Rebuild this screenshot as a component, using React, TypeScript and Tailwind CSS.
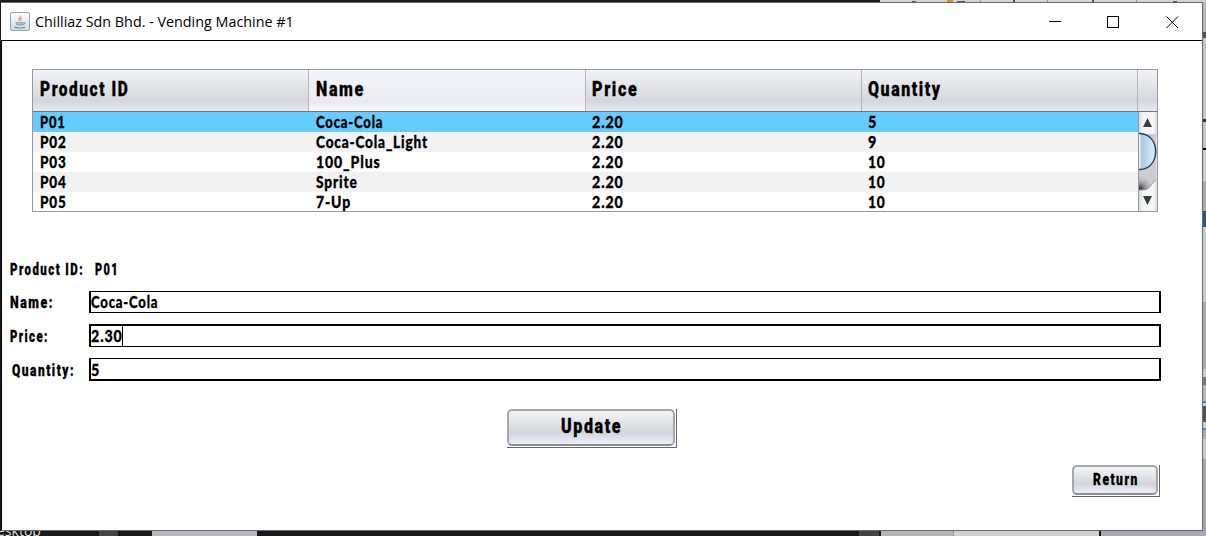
import { useLayoutEffect, useRef } from "react";

/** A single line of text squeezed horizontally to a given width. */
function Fit({ text, width, className }: { text: string; width: number; className: string }) {
  const ref = useRef<HTMLSpanElement>(null);
  useLayoutEffect(() => {
    const el = ref.current;
    if (el) el.style.transform = `scaleX(${(width + 1) / el.offsetWidth})`;
  }, [text, width]);
  return (
    <span className="flex items-start" style={{ width }}>
      <span ref={ref} className={`shrink-0 origin-left whitespace-nowrap ${className}`}>
        {text}
      </span>
    </span>
  );
}

const display = "font-['Roboto',sans-serif] font-black tracking-[2px] [-webkit-text-stroke:0.3px_black]";
const body = "font-['Lato',sans-serif] font-black tracking-[1px] [-webkit-text-stroke:0.3px_black]";

const rows: [string, number, string, number, string, number][] = [
  ["P01", 25, "Coca-Cola", 66, "5", 8],
  ["P02", 26, "Coca-Cola_Light", 111, "9", 8],
  ["P03", 26, "100_Plus", 64, "10", 17],
  ["P04", 26, "Sprite", 41, "10", 17],
  ["P05", 26, "7-Up", 34, "10", 17],
];

function JavaIcon() {
  return (
    <svg width="20" height="20" viewBox="0 0 20 20" fill="none">
      <defs>
        <linearGradient id="jbg" x1="0" y1="0" x2="0" y2="1">
          <stop offset="0" stopColor="#fdfdfd" />
          <stop offset="1" stopColor="#cfdae2" />
        </linearGradient>
      </defs>
      <rect x="0.5" y="0.5" width="19" height="18" rx="1.5" fill="url(#jbg)" stroke="#93a6b3" />
      <path d="M10.800 3.500c.6 1.700-2.800 2.500-2 4 .3.700.8.900 1 1.500M12 6c-1.800.9-2 1.500-1.200 2.600" stroke="#e8935c" strokeWidth="1.100" />
      <path d="M5.500 10.300h8c0 2-1 3.300-2.500 3.300H8c-1.500 0-2.500-1.300-2.500-3.300z" fill="#7d9bb0" />
      <path d="M6.500 11.800h6" stroke="#d6e0e7" strokeWidth=".8" />
      <path d="M13.500 10.500c2-.3 2 1.800-.6 2.200" stroke="#6789a2" />
      <path d="M4.500 15c1.500 1.300 8.500 1.300 10.500 0" stroke="#6789a2" strokeWidth="1.200" />
    </svg>
  );
}

function HeaderCell({ text, width, cell, hot }: { text: string; width: number; cell: string; hot?: boolean }) {
  return (
    <div
      className={`flex items-start border-r border-[#b4b6bd] ${cell} ${
        hot
          ? "bg-linear-to-b from-[#f4f5f9] via-[#e9ebf2] via-80% to-[#fbfbfb]"
          : "bg-linear-to-b from-[#f2f3f5] via-[#d5d7dd] via-75% to-[#e6e9f3]"
      }`}
    >
      <Fit text={text} width={width} className={`${display} text-[20px] leading-[38px]`} />
    </div>
  );
}

function ScrollBar() {
  return (
    <svg width="19" height="99" viewBox="0 0 19 99">
      <defs>
        <linearGradient id="track" x1="0" x2="1">
          <stop offset="0" stopColor="#d2d3d7" />
          <stop offset=".25" stopColor="#f4f4f6" />
          <stop offset=".8" stopColor="#f7f7f8" />
          <stop offset="1" stopColor="#dadbe0" />
        </linearGradient>
        <linearGradient id="thumb" x1="0" x2="1">
          <stop offset="0" stopColor="#91abc0" />
          <stop offset=".13" stopColor="#e7f1f9" />
          <stop offset=".24" stopColor="#b2cce1" />
          <stop offset=".4" stopColor="#b4cfe6" />
          <stop offset=".85" stopColor="#d8ebf8" />
          <stop offset="1" stopColor="#a5c2d9" />
        </linearGradient>
        <radialGradient id="dark" cx=".1" cy=".9" r=".8">
          <stop offset="0" stopColor="#303034" />
          <stop offset="1" stopColor="#c4c5ca" stopOpacity="0" />
        </radialGradient>
      </defs>
      <rect width="19" height="99" fill="url(#track)" />
      <path d="M0 22h18v46c-3 2-5 10-13 10H0z" fill="#cccdd2" />
      <path d="M0 62h18v6c-3 2-5 10-13 10H0z" fill="url(#dark)" />
      <path d="M18 68c-4 1-5 10-13 10H0" fill="none" stroke="#8b8c91" strokeWidth=".7" />
      <path d="M-1 21.500h3c21 1 21 35 0 36h-3z" fill="url(#thumb)" stroke="#2d4357" strokeWidth="1.400" />
      <path d="M5 15l4.500-9 4.500 9zM5 84h9l-4.500 9z" fill="#3b3c3f" />
      <path d="M.5 0v99" stroke="#9698a1" />
    </svg>
  );
}

function Field({ label, labelWidth, labelClass, value, valueWidth, valueClass, box, caret }: {
  label: string; labelWidth: number; labelClass: string; value: string; valueWidth: number; valueClass: string; box: string; caret?: boolean;
}) {
  return (
    <div className="flex">
      <div className={`w-[87px] ${labelClass}`}>
        <Fit text={label} width={labelWidth} className={`${display} text-[16px]`} />
      </div>
      <div className={`flex w-[1072px] border-x-2 border-black ${box}`}>
        <Fit text={value} width={valueWidth} className={`${body} text-[16px] ${valueClass}`} />
        {caret && <div className="h-full w-px bg-black" />}
      </div>
    </div>
  );
}

function Button({ text, width, className, textClass }: { text: string; width: number; className: string; textClass: string }) {
  return (
    <div className={`border-r border-b border-[#65666b] pr-px pb-px ${className}`}>
      <div className="flex h-full justify-center rounded-[5px] border-2 border-[#a6a8ad] border-b-[#8b8d93] bg-linear-to-b from-[#f4f5f6] via-[#d3d5dc] via-65% to-[#eceffa]">
        <Fit text={text} width={width} className={`${display} ${textClass}`} />
      </div>
    </div>
  );
}

export default function App() {
  return (
    <div className="flex h-[536px] w-[1206px] flex-col overflow-hidden bg-[#18181a]">
      <div className="flex h-[2px]">
        <div className="w-[880px] bg-[#1e1c1f]" />
        <div className="flex grow items-center bg-[#d4d4d4]">
          <div className="ml-8 h-px w-1 bg-[#555]" />
          <div className="ml-[31px] h-[2px] w-1.5 bg-[#d88a3e]" />
          <div className="ml-1 h-px w-2 bg-[#555]" />
          <div className="ml-[15px] h-[2px] w-px bg-[#999]" />
          <div className="ml-8 h-[2px] w-0.5 bg-[#555]" />
          <div className="ml-8 h-[2px] w-px bg-[#999]" />
          <div className="ml-11 h-[2px] w-0.5 bg-[#555]" />
          <div className="ml-[42px] h-[2px] w-px bg-[#999]" />
          <div className="ml-9 h-px w-1 bg-[#555]" />
        </div>
      </div>
      <div className="flex h-[529px]">
        <div className="w-px bg-[#1d1b1e]" />
        <main className="flex w-[1202px] flex-col border-t border-r border-b border-[#6a6a6a] bg-white">
          <header className="flex h-[38px] items-center border-b border-black pl-[9px]">
            <JavaIcon />
            <div className="ml-[5px] w-[1004px]">
              <Fit text="Chilliaz Sdn Bhd. - Vending Machine #1" width={258} className="font-['Open_Sans',sans-serif] text-[14px] leading-9" />
            </div>
            <svg width="140" height="20" viewBox="0 0 140 20" fill="none" stroke="#000">
              <path d="M10 9.500h12M68.500 4.500h11v11h-11z" shapeRendering="crispEdges" />
              <path d="M127.500 4.500l11.500 11.500M139 4.500l-11.500 11.500" />
            </svg>
          </header>
          <section className="flex grow flex-col border-l border-black">
            <div className="mt-[28px] ml-[30px] h-[143px] w-[1126px] border border-[#9698a4]">
              <div className="flex h-[42px] border-b border-[#71737c]">
                <HeaderCell text="Product ID" width={88} cell="w-[276px] pl-[7px]" />
                <HeaderCell text="Name" width={48} cell="w-[277px] pl-[7px]" hot />
                <HeaderCell text="Price" width={45} cell="w-[276px] pl-[6px]" />
                <HeaderCell text="Quantity" width={73} cell="w-[276px] pl-[6px]" />
                <div className="grow bg-linear-to-b from-[#f2f3f5] via-[#d5d7dd] via-75% to-[#e6e9f3]" />
              </div>
              <div className="flex h-[99px]">
                <div className="w-[1105px]">
                  {rows.map(([id, idW, name, nameW, qty, qtyW], i) => (
                    <div key={id} className={`flex pl-[7px] ${i === 4 ? "h-[19px]" : "h-5"} ${i === 0 ? "bg-[#66ccff]" : i % 2 ? "bg-[#f2f2f2]" : "bg-white"}`}>
                      <div className="w-[276px]"><Fit text={id} width={idW} className={`${body} text-[16px] leading-[20px]`} /></div>
                      <div className="w-[276px]"><Fit text={name} width={nameW} className={`${body} text-[16px] leading-[20px]`} /></div>
                      <div className="w-[276px]"><Fit text="2.20" width={31} className={`${body} text-[16px] leading-[20px]`} /></div>
                      <Fit text={qty} width={qtyW} className={`${body} text-[16px] leading-[20px]`} />
                    </div>
                  ))}
                </div>
                <ScrollBar />
              </div>
            </div>
            <div className="mt-[46px] flex h-[33px] pl-[8px] leading-[23px]">
              <div className="w-[85px]">
                <Fit text="Product ID:" width={73} className={`${display} text-[16px]`} />
              </div>
              <Fit text="P01" width={23} className={`${display} text-[16px]`} />
            </div>
            <div className="h-[33px]">
              <Field label="Name:" labelWidth={43} labelClass="pl-[8px] leading-[23px]" value="Coca-Cola" valueWidth={66} valueClass="leading-[20px]" box="h-[22px] border-y" />
            </div>
            <div className="h-[34px]">
              <Field label="Price:" labelWidth={38} labelClass="pl-[8px] leading-[25px]" value="2.30" valueWidth={31} valueClass="leading-[20px]" box="h-[23px] border-t-2 border-b" caret />
            </div>
            <div className="h-[51px]">
              <Field label="Quantity:" labelWidth={62} labelClass="pl-[10px] leading-[25px]" value="5" valueWidth={8} valueClass="leading-[22px]" box="h-[23px] border-t border-b-2" />
            </div>
            <Button text="Update" width={60} className="ml-[505px] h-[39px] w-[170px]" textClass="text-[20px] leading-[31px]" />
            <Button text="Return" width={45} className="mt-[17px] ml-[1070px] h-[32px] w-[88px]" textClass="text-[16px] leading-[25px]" />
          </section>
        </main>
        <div className="flex w-[3px] flex-col bg-[#a5a6aa]">
          <div className="h-[30px] bg-[#b9b9ba]" />
          <div className="h-[6px] bg-[#555]" />
          <div className="h-[81px] bg-[#c5c5c5]" />
          <div className="h-[3px] bg-[#333]" />
          <div className="h-[26px] bg-[#c5c5c5]" />
          <div className="h-[2px] bg-black" />
          <div className="h-[31px] bg-[#d0cfcc]" />
          <div className="h-[30px] bg-[#a9aaaf]" />
          <div className="h-[16px] bg-[#285878]" />
          <div className="h-[75px] bg-[#cacaca]" />
          <div className="h-[67px] bg-[#a9aaaf]" />
          <div className="h-[8px] bg-[#ccc]" />
          <div className="h-[8px] bg-[#777]" />
          <div className="h-[16px] bg-[#b3b5ba]" />
          <div className="h-[2px] bg-[#5e83a8]" />
          <div className="h-[3px] bg-[#ccc]" />
          <div className="h-[16px] bg-[#555]" />
          <div className="h-[6px] bg-[#ccc]" />
          <div className="h-[2px] bg-[#5e83a8]" />
          <div className="h-[9px] bg-[#a9aaaf]" />
          <div className="h-[20px] bg-[#ccc]" />
        </div>
      </div>
      <div className="flex h-[5px]">
        <div className="flex w-[99px] items-end overflow-hidden font-['Open_Sans',sans-serif] text-[14px] leading-[10px] text-[#ddd]">
          <span className="-ml-[3px]">esktop</span>
        </div>
        <div className="w-[19px] bg-[#444]" />
        <div className="w-[34px]" />
        <div className="w-[105px] bg-[#b8b7c0]" />
        <div className="w-[602px]" />
        <div className="w-[20px] bg-[#414142]" />
        <div className="w-[2px]" />
        <div className="w-[72px] bg-[#b5b5b5]" />
        <div className="w-[146px] border-l border-[#999] bg-[#d0d0d0]" />
        <div className="w-[2px]" />
        <div className="grow bg-[#a6abb2]" />
      </div>
    </div>
  );
}
